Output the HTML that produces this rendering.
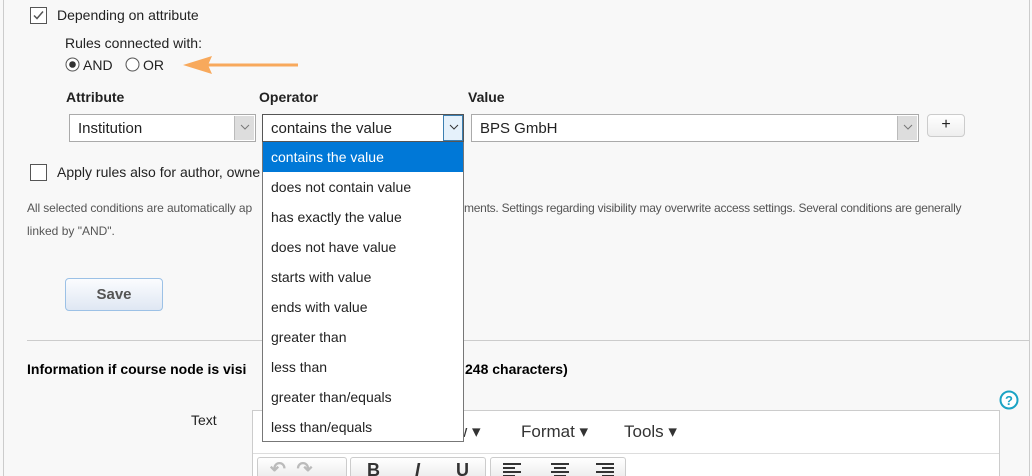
<!DOCTYPE html>
<html style="width:1032px;height:476px;overflow:hidden"><head><meta charset="utf-8"><style>
*{box-sizing:border-box;margin:0;padding:0}
body{width:1032px;height:476px;overflow:hidden;background:#f8f8f8;font-family:"Liberation Sans",sans-serif;color:#222;position:relative}
.a{position:absolute;white-space:nowrap}
.cb{position:absolute;width:17px;height:17px;border:1px solid #555;background:#fff}
.t14{font-size:14px}
.b{font-weight:bold}
.sel{position:absolute;height:28px;background:#fff;border:1px solid #aaa;font-size:15px;padding:5px 8px}
.btn{position:absolute;top:1px;right:1px;width:20px;height:24px;background:#ddd;border-left:1px solid #bbb}
.btn svg{position:absolute;left:5px;top:8px}
.dd{position:absolute;left:262px;top:142px;width:202px;height:300px;background:#fff;border:1px solid #777;border-top:none;font-size:14px}
.dd div{height:30px;line-height:30px;padding-left:8px}
.small{font-size:12px;color:#555}
.tb{position:absolute;top:457px;height:19px;border:1px solid #ccc;border-bottom:none;border-radius:3px 3px 0 0;background:linear-gradient(#fff,#eee)}
</style></head><body>
<div class="a" style="left:3px;top:0;width:1px;height:476px;background:#ccc"></div>
<div class="a" style="left:1029px;top:0;width:1px;height:476px;background:#ccc"></div>

<div class="cb" style="left:30px;top:7px"><svg width="15" height="15"><path d="M3 7.5l3 3 6-7" stroke="#555" stroke-width="1.5" fill="none"/></svg></div>
<div class="a t14" style="left:57px;top:7px">Depending on attribute</div>
<div class="a t14" style="left:65px;top:35px">Rules connected with:</div>
<svg class="a" style="left:65px;top:57px" width="16" height="16"><circle cx="7.5" cy="7.5" r="6.5" fill="#fff" stroke="#555"/><circle cx="7.5" cy="7.5" r="3.3" fill="#333"/></svg>
<div class="a t14" style="left:83px;top:57px">AND</div>
<svg class="a" style="left:125px;top:57px" width="16" height="16"><circle cx="7.5" cy="7.5" r="6.5" fill="#fff" stroke="#555"/></svg>
<div class="a t14" style="left:143px;top:57px">OR</div>
<svg class="a" style="left:180px;top:54px" width="122" height="22"><path d="M118 11H20" stroke="#f8a95c" stroke-width="3"/><path d="M3 11L32 2 28 11 32 20Z" fill="#f8a95c"/></svg>

<div class="a t14 b" style="left:66px;top:89px">Attribute</div>
<div class="a t14 b" style="left:259px;top:89px">Operator</div>
<div class="a t14 b" style="left:468px;top:89px">Value</div>

<div class="sel" style="left:69px;top:114px;width:187px">Institution<div class="btn"><svg width="10" height="7"><path d="M1 1l4 4 4-4" stroke="#777" fill="none"/></svg></div></div>
<div class="sel" style="left:262px;top:114px;width:202px;border-color:#555">contains the value<div class="btn" style="background:#e5f1fb;border:1px solid #3c7fb1;top:0;right:0;height:26px"><svg width="10" height="7"><path d="M1 1l4 4 4-4" stroke="#333" fill="none"/></svg></div></div>
<div class="sel" style="left:471px;top:114px;width:448px">BPS GmbH<div class="btn"><svg width="10" height="7"><path d="M1 1l4 4 4-4" stroke="#777" fill="none"/></svg></div></div>
<div class="a" style="left:927px;top:114px;width:38px;height:23px;border:1px solid #ccc;border-radius:4px;background:linear-gradient(#fff,#eee);text-align:center;font-size:16px;line-height:20px">+</div>

<div class="cb" style="left:30px;top:164px"></div>
<div class="a t14" style="left:57px;top:164px">Apply rules also for author, owne</div>
<div class="a small" style="left:27px;top:201px;letter-spacing:-0.1px">All selected conditions are automatically ap</div>
<div class="a small" style="left:464px;top:201px;letter-spacing:-0.25px">ments. Settings regarding visibility may overwrite access settings. Several conditions are generally</div>
<div class="a small" style="left:27px;top:224px">linked by "AND".</div>

<div class="a" style="left:65px;top:278px;width:98px;height:33px;border:1px solid #9cc1e6;border-radius:4px;background:linear-gradient(#fbfcfe,#dfe7f3);text-align:center;line-height:31px;font-size:15px;font-weight:bold;color:#555">Save</div>
<div class="a" style="left:27px;top:340px;width:1003px;height:1px;background:#ccc"></div>
<div class="a t14 b" style="left:27px;top:361px;color:#000">Information if course node is visi</div>
<div class="a t14 b" style="left:465px;top:361px;color:#000">248 characters)</div>
<svg class="a" style="left:999px;top:390px" width="20" height="20"><circle cx="10" cy="10" r="8.5" fill="#fff" stroke="#1ba3c4" stroke-width="2"/><text x="10" y="15" font-size="13" font-weight="bold" text-anchor="middle" fill="#1ba3c4" font-family="Liberation Sans">?</text></svg>
<div class="a t14" style="left:191px;top:412px">Text</div>

<div class="a" style="left:252px;top:410px;width:748px;height:66px;border:1px solid #ccc;border-bottom:none;background:#fff"></div>
<div class="a" style="left:253px;top:453px;width:746px;height:1px;background:#ddd"></div>
<div class="a" style="left:455px;top:422px;font-size:17px;color:#333">w ▾</div>
<div class="a" style="left:521px;top:422px;font-size:17px;color:#333">Format ▾</div>
<div class="a" style="left:624px;top:422px;font-size:17px;color:#333">Tools ▾</div>
<div class="tb" style="left:257px;width:90px"></div>
<div class="tb" style="left:350px;width:136px"></div>
<div class="tb" style="left:490px;width:136px"></div>
<div class="a" style="left:270px;top:458px;font-size:19px;color:#bbb;font-weight:bold">↶&nbsp;&nbsp;↷</div>
<div class="a b" style="left:367px;top:460px;font-size:18px;color:#333">B</div>
<div class="a b" style="left:415px;top:460px;font-size:18px;color:#333;font-style:italic">I</div>
<div class="a b" style="left:456px;top:460px;font-size:18px;color:#333">U</div>
<svg class="a" style="left:502px;top:462px" width="120" height="14"><g stroke="#333" stroke-width="2"><path d="M1 2h18M1 6h12M1 10h18M1 14h12"/><path d="M49 2h18M52 6h12M49 10h18M52 14h12"/><path d="M94 2h18M100 6h12M94 10h18M100 14h12"/></g></svg>

<div class="dd">
<div style="background:#0078d7;color:#fff">contains the value</div>
<div>does not contain value</div>
<div>has exactly the value</div>
<div>does not have value</div>
<div>starts with value</div>
<div>ends with value</div>
<div>greater than</div>
<div>less than</div>
<div>greater than/equals</div>
<div>less than/equals</div>
</div>
</body></html>
